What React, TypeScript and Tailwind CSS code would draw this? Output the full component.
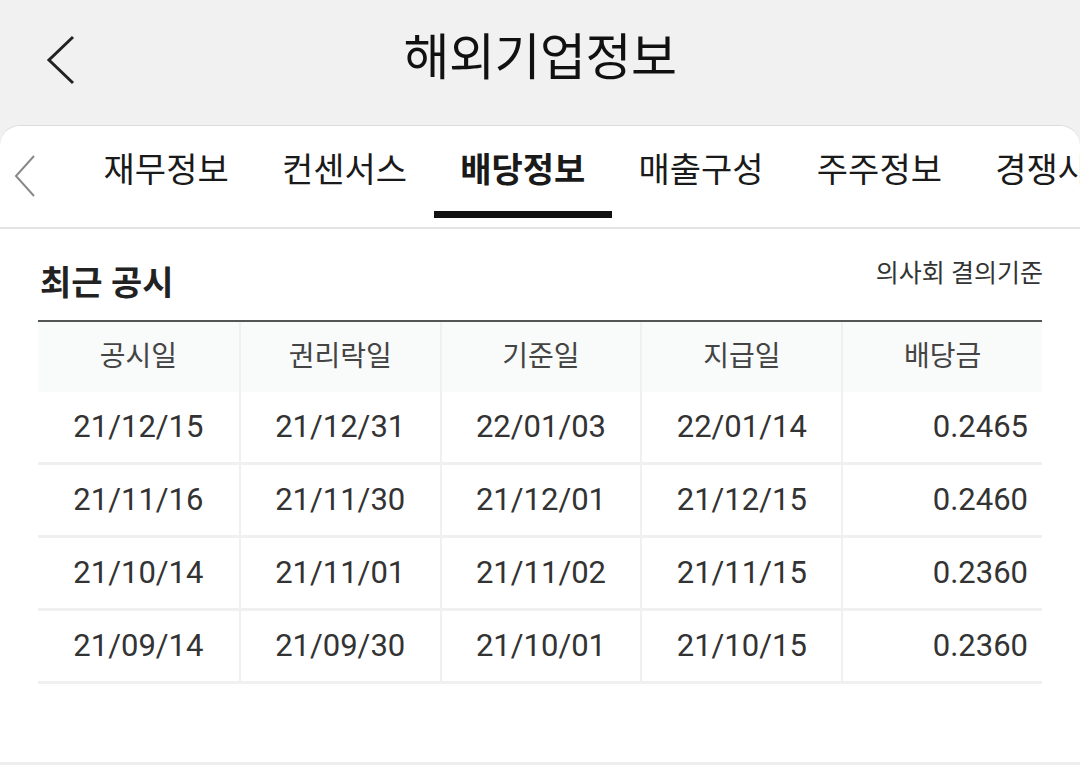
const tabs = ["재무정보", "컨센서스", "배당정보", "매출구성", "주주정보", "경쟁사"];

const rows = [
  ["21/12/15", "21/12/31", "22/01/03", "22/01/14", "0.2465"],
  ["21/11/16", "21/11/30", "21/12/01", "21/12/15", "0.2460"],
  ["21/10/14", "21/11/01", "21/11/02", "21/11/15", "0.2360"],
  ["21/09/14", "21/09/30", "21/10/01", "21/10/15", "0.2360"],
];

const heads = ["공시일", "권리락일", "기준일", "지급일", "배당금"];

const font = { fontFamily: 'Roboto, "Noto Sans CJK KR", sans-serif' };

export default function App() {
  return (
    <div className="w-[1080px] h-[765px] bg-[#f1f1f1] overflow-hidden flex flex-col" style={font}>
      {/* Top bar */}
      <header className="relative h-[125px] flex items-start justify-center">
        <button className="absolute left-[44px] top-[34px] w-[34px] h-[52px]">
          <svg width="34" height="52" viewBox="0 0 34 52" fill="none">
            <path d="M29 3 L5 26 L29 49" stroke="#222" strokeWidth="3" />
          </svg>
        </button>
        <h1 className="mt-[28px] text-[50px] leading-[60px] text-[#111] tracking-[-0.5px]">해외기업정보</h1>
      </header>

      {/* Panel */}
      <div className="flex-1 bg-white rounded-t-[20px] border-t border-[#dcdcdc] flex flex-col">
        {/* Tabs */}
        <nav className="h-[103px] flex border-b-2 border-[#e3e3e3] overflow-hidden">
          <div className="w-[77px] shrink-0 flex items-center pl-[14px] pb-[2px]">
            <svg width="22" height="42" viewBox="0 0 22 42" fill="none">
              <path d="M20 1 L2 21 L20 41" stroke="#8a8a8a" strokeWidth="2" />
            </svg>
          </div>
          {tabs.map((t, i) => (
            <div key={t} className="shrink-0 flex flex-col items-center">
              <span
                className={`mt-[21px] px-[26.6px] text-[34px] leading-[46px] whitespace-nowrap text-[#1a1a1a] ${
                  i === 2 ? "font-bold" : ""
                }`}
              >
                {t}
              </span>
              {i === 2 && <div className="mt-[18px] w-full h-[7px] bg-[#111]" />}
            </div>
          ))}
        </nav>

        {/* Section */}
        <section className="px-[38px] pt-[30px] flex flex-col">
          <div className="flex items-start justify-between h-[61px]">
            <h2 className="ml-[2px] mt-[1px] text-[34px] leading-[46px] font-bold text-[#222]">최근 공시</h2>
            <span className="mr-[-1px] text-[25px] leading-[30px] text-[#333]">의사회 결의기준</span>
          </div>

          <div className="border-t-2 border-[#555]">
            <div className="grid grid-cols-5 bg-[#f9fafa] h-[70px]">
              {heads.map((h, i) => (
                <div
                  key={h}
                  className={`flex items-center justify-center text-[28px] text-[#444] ${
                    i > 0 ? "border-l-2 border-[#f0f0f0]" : ""
                  }`}
                >
                  {h}
                </div>
              ))}
            </div>
            {rows.map((r, ri) => (
              <div key={ri} className="grid grid-cols-5 h-[73px] border-b-[3px] border-[#f0f0f0]">
                {r.map((c, ci) => (
                  <div
                    key={ci}
                    className={`flex items-center text-[31px] text-[#333] ${
                      ci > 0 ? "border-l-2 border-[#f0f0f0]" : ""
                    } ${ci === 4 ? "justify-end pr-[14px]" : "justify-center"}`}
                  >
                    {c}
                  </div>
                ))}
              </div>
            ))}
          </div>
        </section>

        <div className="mt-auto h-[3px] bg-[#eeeeee]" />
      </div>
    </div>
  );
}
